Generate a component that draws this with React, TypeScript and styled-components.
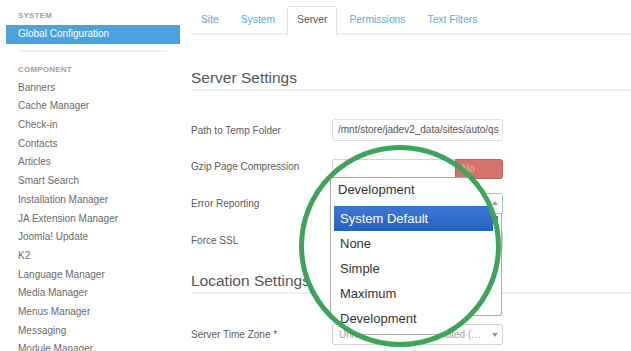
import React from 'react';
import styled, { createGlobalStyle } from 'styled-components';

const GlobalStyle = createGlobalStyle`
  html, body {
    margin: 0;
    padding: 0;
    background: #fff;
  }
  body {
    font-family: "Liberation Sans", Arial, sans-serif;
    overflow: hidden;
  }
  * {
    box-sizing: border-box;
  }
`;

const Page = styled.div`
  position: relative;
  display: flex;
  width: 631px;
  height: 351px;
  overflow: hidden;
  background: #fff;
`;

/* ---------- sidebar ---------- */

const Sidebar = styled.nav`
  flex: none;
  width: 180px;
  padding: 10px 0 0 6px;
`;

const SectionLabel = styled.div<{ $gap?: number }>`
  margin-top: ${p => p.$gap ?? 0}px;
  margin-bottom: 4px;
  padding-left: 12px;
  font-size: 8px;
  font-weight: bold;
  line-height: 11px;
  color: #a0a0a0;
  letter-spacing: 0.2px;
`;

const NavItem = styled.div<{ $active?: boolean }>`
  height: 18.7px;
  padding-left: 12px;
  font-size: 10px;
  line-height: 18.7px;
  white-space: nowrap;
  color: ${p => (p.$active ? '#fff' : '#6a6a6a')};
  background: ${p => (p.$active ? '#4aa3df' : 'transparent')};
`;

const Divider = styled.div`
  height: 2px;
  margin: 6px 13px 0 13px;
  background: #f0f0f0;
`;

/* ---------- main ---------- */

const Main = styled.main`
  flex: 1;
  min-width: 0;
  padding: 6px 0 0 11px;
`;

const TabBar = styled.div`
  display: flex;
  height: 29px;
  border-bottom: 2px solid #eee;
`;

const Tab = styled.div<{ $active?: boolean }>`
  height: ${p => (p.$active ? 29 : 27)}px;
  margin-right: 2px;
  padding: 0 ${p => (p.$active ? 9 : 10)}px;
  font-size: 10.3px;
  line-height: ${p => (p.$active ? 26 : 27)}px;
  white-space: nowrap;
  color: ${p => (p.$active ? '#555' : '#5aaae0')};
  background: #fff;
  border: ${p => (p.$active ? '1px solid #e2e2e2' : 'none')};
  border-bottom: none;
  border-radius: 4px 4px 0 0;
`;

const SectionHeading = styled.h2<{ $gap: number }>`
  margin: ${p => p.$gap}px 0 0;
  padding-bottom: 2px;
  font-size: 15.5px;
  font-weight: normal;
  line-height: 18px;
  white-space: nowrap;
  color: #555;
  border-bottom: 2px solid #eee;
`;

const FormRow = styled.div<{ $gap: number }>`
  position: relative;
  display: flex;
  align-items: center;
  height: 22px;
  margin-top: ${p => p.$gap}px;
`;

const FieldLabel = styled.div`
  flex: none;
  width: 141px;
  font-size: 10px;
  color: #5a5a5a;
  white-space: nowrap;
`;

const TextInput = styled.div`
  width: 171px;
  height: 22px;
  padding: 0 5px;
  font-size: 10px;
  line-height: 20px;
  color: #555;
  white-space: nowrap;
  overflow: hidden;
  border: 1px solid #ddd;
  border-radius: 3px;
`;

/* sits above the lens backdrop, under the magnified list */
const Toggle = styled.div`
  position: relative;
  z-index: 2;
  display: flex;
  width: 171px;
  height: 20px;
  margin-top: 5px;
`;

const ToggleButton = styled.div<{ $danger?: boolean }>`
  flex: ${p => (p.$danger ? '0 0 48px' : '1')};
  padding-left: 6px;
  font-size: 10px;
  line-height: 18px;
  color: rgba(255, 255, 255, 0.45);
  background: ${p => (p.$danger ? '#d4736c' : '#fff')};
  border: 1px solid ${p => (p.$danger ? '#c0605a' : '#d4d4d4')};
  border-right: ${p => (p.$danger ? '1px solid #c0605a' : 'none')};
  border-radius: ${p => (p.$danger ? '0 3px 3px 0' : '3px 0 0 3px')};
`;

const SelectBox = styled.div<{ $open?: boolean; $muted?: boolean }>`
  position: relative;
  width: 171px;
  height: 21px;
  padding: 0 18px 0 6px;
  font-size: 10px;
  line-height: 19px;
  color: ${p => (p.$muted ? '#a5a5a5' : '#555')};
  white-space: nowrap;
  background: #fff;
  border: 1px solid ${p => (p.$open ? '#a9c1ea' : '#d0d0d0')};
  border-radius: ${p => (p.$open ? '3px 3px 0 0' : '3px')};
`;

const SelectText = styled.div`
  overflow: hidden;
  text-overflow: ellipsis;
`;

const Caret = styled.span<{ $up?: boolean }>`
  position: absolute;
  right: 4px;
  top: 50%;
  margin-top: -2px;
  width: 0;
  height: 0;
  border-left: 3.5px solid transparent;
  border-right: 3.5px solid transparent;
  ${p => (p.$up ? 'border-bottom: 4px solid #999;' : 'border-top: 4px solid #999;')}
`;

/* the real (unmagnified) open list, mostly hidden behind the lens */
const DropList = styled.div`
  position: absolute;
  z-index: 1;
  left: -1px;
  top: 20px;
  width: 170px;
  padding: 2px 3px;
  background: #fff;
  border: 1px solid #aaa;
  border-top: none;
  border-radius: 0 0 3px 3px;
`;

const DropOption = styled.div<{ $selected?: boolean }>`
  height: 19.5px;
  background: ${p => (p.$selected ? 'linear-gradient(#3875d7 20%, #2a62bc 90%)' : 'transparent')};
`;

/* ---------- magnifier overlay ---------- */

const LensBackdrop = styled.div`
  position: absolute;
  z-index: 1;
  left: 302px;
  top: 148px;
  width: 196px;
  height: 196px;
  border-radius: 50%;
  background: #fff;
`;

const ZoomPanel = styled.div`
  position: absolute;
  z-index: 3;
  left: 330px;
  top: 177px;
  width: 167px;
  background: #fff;
  border: 1px solid #aaa;
  border-top-color: #8aa8da;
  clip-path: circle(98px at 70px 69px);
`;

const ZoomHeader = styled.div`
  height: 26px;
  padding-left: 7px;
  font-size: 13px;
  line-height: 24px;
  color: #333;
`;

const ZoomList = styled.div`
  padding: 2px 3px 3px;
`;

const ZoomOption = styled.div<{ $selected?: boolean }>`
  height: 25px;
  padding-left: 6px;
  font-size: 13px;
  line-height: 25px;
  white-space: nowrap;
  color: ${p => (p.$selected ? '#fff' : '#333')};
  background: ${p => (p.$selected ? 'linear-gradient(#3875d7 20%, #2a62bc 90%)' : 'transparent')};
`;

const LensRing = styled.div`
  position: absolute;
  z-index: 4;
  left: 299px;
  top: 145px;
  width: 202px;
  height: 202px;
  border: 5px solid #3ca55a;
  border-radius: 50%;
  pointer-events: none;
`;

const components = [
  'Banners',
  'Cache Manager',
  'Check-in',
  'Contacts',
  'Articles',
  'Smart Search',
  'Installation Manager',
  'JA Extension Manager',
  'Joomla! Update',
  'K2',
  'Language Manager',
  'Media Manager',
  'Menus Manager',
  'Messaging',
  'Module Manager',
];

const tabs = ['Site', 'System', 'Server', 'Permissions', 'Text Filters'];

const errorLevels = ['System Default', 'None', 'Simple', 'Maximum', 'Development'];

export default function App() {
  return (
    <Page>
      <GlobalStyle />
      <Sidebar>
        <SectionLabel>SYSTEM</SectionLabel>
        <NavItem $active>Global Configuration</NavItem>
        <Divider />
        <SectionLabel $gap={12}>COMPONENT</SectionLabel>
        {components.map(name => (
          <NavItem key={name}>{name}</NavItem>
        ))}
      </Sidebar>

      <Main>
        <TabBar>
          {tabs.map(t => (
            <Tab key={t} $active={t === 'Server'}>
              {t}
            </Tab>
          ))}
        </TabBar>

        <SectionHeading $gap={34}>Server Settings</SectionHeading>

        <FormRow $gap={28}>
          <FieldLabel>Path to Temp Folder</FieldLabel>
          <TextInput>/mnt/store/jadev2_data/sites/auto/qs</TextInput>
        </FormRow>

        <FormRow $gap={14.7}>
          <FieldLabel>Gzip Page Compression</FieldLabel>
          <Toggle>
            <ToggleButton />
            <ToggleButton $danger>No</ToggleButton>
          </Toggle>
        </FormRow>

        <FormRow $gap={14.7}>
          <FieldLabel>Error Reporting</FieldLabel>
          <SelectBox $open>
            <Caret $up />
            <DropList>
              {errorLevels.map((lvl, i) => (
                <DropOption key={lvl} $selected={i === 0} />
              ))}
            </DropList>
          </SelectBox>
        </FormRow>

        <FormRow $gap={14.7}>
          <FieldLabel>Force SSL</FieldLabel>
          <SelectBox>
            <Caret />
          </SelectBox>
        </FormRow>

        <SectionHeading $gap={20.5}>Location Settings</SectionHeading>

        <FormRow $gap={30}>
          <FieldLabel>Server Time Zone *</FieldLabel>
          <SelectBox $muted>
            <SelectText>Universal Time, Coordinated (UTC)</SelectText>
            <Caret />
          </SelectBox>
        </FormRow>
      </Main>

      <LensBackdrop />
      <ZoomPanel>
        <ZoomHeader>Development</ZoomHeader>
        <ZoomList>
          {errorLevels.map((lvl, i) => (
            <ZoomOption key={lvl} $selected={i === 0}>
              {lvl}
            </ZoomOption>
          ))}
        </ZoomList>
      </ZoomPanel>
      <LensRing />
    </Page>
  );
}
